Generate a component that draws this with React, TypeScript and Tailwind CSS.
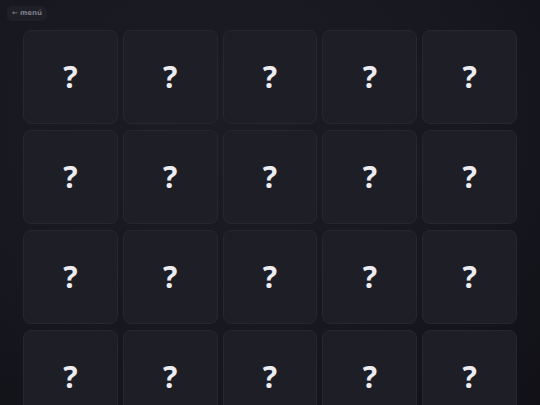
const cards = Array.from({ length: 20 }, (_, i) => i);

const Card = () => {
  return (
    <div className="h-[94px] rounded-[8px] border border-[#272731] bg-[#1e1e27] grid place-items-center">
      <span className="text-[30px] font-bold leading-none text-[#ececf1] font-['Noto_Sans',sans-serif]">?</span>
    </div>
  );
};

export default function App() {
  return (
    <div className="h-[405px] w-[540px] overflow-hidden bg-[radial-gradient(ellipse_at_40%_30%,#1c1c25_0%,#17171f_60%,#101016_100%)] font-['DejaVu_Sans',sans-serif]">
      <div className="pl-[7px] pt-[6px]">
        <button className="h-[15px] rounded-[5px] bg-[#1f1f28] px-[5px] text-[7px] font-bold text-[#7b7b88] flex items-center gap-[2px]">
          <span>←</span>
          <span>menú</span>
        </button>
      </div>
      <div className="mx-auto mt-[9px] grid w-[494px] grid-cols-5 gap-[5px] gap-y-[6px]">
        {cards.map((i) => (
          <Card key={i} />
        ))}
      </div>
    </div>
  );
}
